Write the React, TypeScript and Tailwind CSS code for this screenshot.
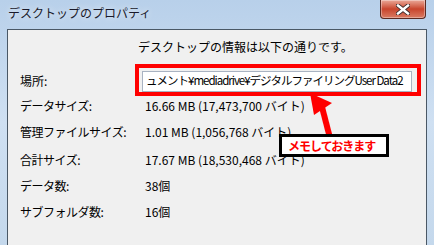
import React from 'react';

const rows = [
  { label: 'データサイズ:', value: '16.66 MB (17,473,700 バイト)', h: 'h-[24px]' },
  { label: '管理ファイルサイズ:', value: '1.01 MB (1,056,768 バイト)', h: 'h-[28px]' },
  { label: '合計サイズ:', value: '17.67 MB (18,530,468 バイト)', h: 'h-[27px]' },
  { label: 'データ数:', value: '38個', h: 'h-[26px]' },
  { label: 'サブフォルダ数:', value: '16個', h: 'h-[26px]' },
];

function CloseButton() {
  return (
    <div className="w-[46px] h-[19px] rounded-b-[4px] border border-t-0 border-[#5b2a22] bg-gradient-to-b from-[#e9a898] via-[#c8442c] to-[#d97a62] flex items-center justify-center shadow-[inset_0_0_0_1px_rgba(255,255,255,0.35)]">
      <svg width="14" height="11" viewBox="0 0 14 11">
        <path d="M2 1.5 L12 9.5 M12 1.5 L2 9.5" stroke="#3a2a2a" strokeWidth="4.2" strokeLinecap="square" />
        <path d="M2 1.5 L12 9.5 M12 1.5 L2 9.5" stroke="#ffffff" strokeWidth="2.4" strokeLinecap="square" />
      </svg>
    </div>
  );
}

export default function App() {
  return (
    <div
      className="relative w-[434px] h-[245px] overflow-hidden bg-gradient-to-b from-[#b8d0ea] via-[#cfe0f2] to-[#c4d8ec] text-black"
      style={{ fontFamily: '"Noto Sans CJK JP", "Liberation Sans", sans-serif' }}>
      {/* title bar */}
      <div className="h-[29px] flex items-start">
        <div className="pl-[8px] pt-[5px] text-[12px] leading-[16px] text-[#1a1a2a] [text-shadow:0_0_6px_rgba(255,255,255,0.9)]">
          デスクトップのプロパティ
        </div>
        <div className="ml-auto mr-[8px]">
          <CloseButton />
        </div>
      </div>

      {/* client area */}
      <div className="mx-[7px] h-[216px] border border-b-0 border-[#4a5866] bg-[#f0f0f0]">
        <div className="pl-[130px] mt-[9px] h-[16px] text-[12px] leading-[16px]">
          デスクトップの情報は以下の通りです。
        </div>

        <div className="mt-[13px] h-[26px] flex items-center text-[12px]">
          <div className="w-[134px] pl-[12px]">場所:</div>
          <div className="w-[270px] h-[21px] border border-[#a9b3c2] bg-white flex items-center pl-[3px] overflow-hidden whitespace-nowrap text-[11.5px] tracking-[-1px]">
            ュメント¥mediadrive¥デジタルファイリングUser Data2
          </div>
        </div>

        {rows.map((r) => (
          <div key={r.label} className={`${r.h} flex items-center text-[12px]`}>
            <div className="w-[137px] pl-[12px] tracking-[-0.5px]">{r.label}</div>
            <div className="whitespace-nowrap">{r.value}</div>
          </div>
        ))}
      </div>

      {/* annotation: red frame around the path */}
      <div className="absolute left-[135px] top-[64px] w-[286px] h-[32px] border-[4px] border-[#ff0000]" />

      {/* annotation: arrow */}
      <svg className="absolute left-[300px] top-[88px]" width="40" height="55" viewBox="0 0 40 55">
        <polygon points="10,5 14,27 32,15" fill="#ff0000" />
        <line x1="22" y1="19" x2="30" y2="50" stroke="#ff0000" strokeWidth="6" />
      </svg>

      {/* annotation: callout */}
      <div className="absolute left-[279px] top-[134px] w-[110px] h-[23px] border-[3px] border-black bg-white flex items-center pl-[6px]">
        <span className="whitespace-nowrap text-[12px] font-bold text-[#ff0000] leading-none tracking-[-1px]">メモしておきます</span>
      </div>
    </div>
  );
}
